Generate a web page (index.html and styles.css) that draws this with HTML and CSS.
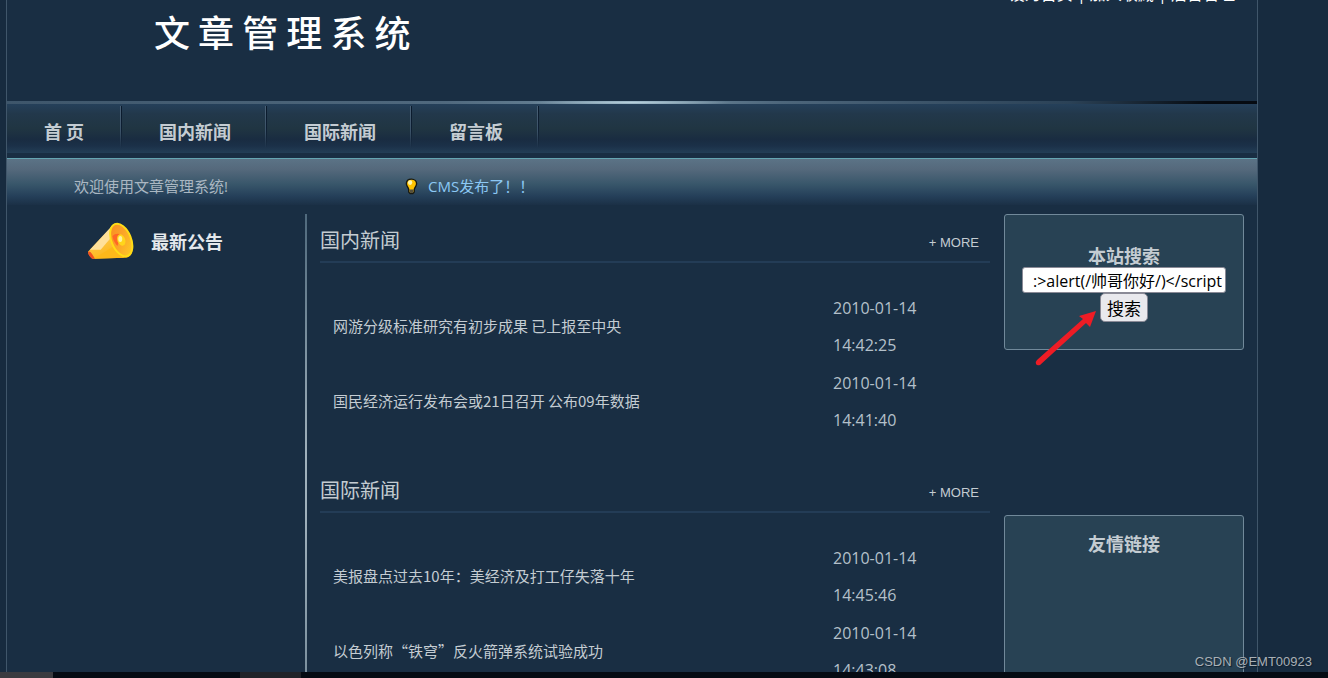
FILE: index.html
```html
<!DOCTYPE html>
<html lang="zh-CN">
<head>
<meta charset="utf-8">
<title>文章管理系统</title>
<link rel="stylesheet" href="styles.css">
</head>
<body>
<div class="viewport">
  <div class="page">
    <header class="header">
      <div class="top-links"><a href="#">设为首页</a> | <a href="#">加入收藏</a> | <a href="#">后台管理</a></div>
      <h1 class="logo">文 章 管 理 系 统</h1>
    </header>
    <div class="shine"></div>
    <nav class="nav">
      <a href="#">首 页</a>
      <a href="#">国内新闻</a>
      <a href="#">国际新闻</a>
      <a href="#">留言板</a>
    </nav>
    <div class="notice">
      <span class="welcome">欢迎使用文章管理系统!</span>
      <svg class="bulb" viewBox="0 0 14 18" aria-hidden="true">
        <path d="M7 1C3.600 1 1.500 3.200 1.500 6c0 2.500 2 3.600 2.500 6v3l1.500 1.500h3L10 15v-3c.5-2.400 2.500-3.500 2.500-6C12.500 3.200 10.400 1 7 1z" fill="#ffc400" stroke="#171912" stroke-width="1.500"/>
        <path d="M4.800 12.200h4.400v2.600L8.200 16H5.800l-1-1.200z" fill="#55503c"/>
        <ellipse cx="5.500" cy="4.800" rx="2.300" ry="2.500" fill="#fff7b0"/>
      </svg>
      <a class="notice-link" href="#">CMS发布了！！</a>
    </div>
    <div class="content">
      <aside class="left">
        <svg class="horn" viewBox="0 0 48 38" aria-hidden="true">
          <defs>
            <linearGradient id="hornBody" x1="0" y1="0" x2="0.500" y2="1">
              <stop offset="0.350" stop-color="#ffe19a"/><stop offset="0.600" stop-color="#fdc23a"/><stop offset="1" stop-color="#fdb515"/>
            </linearGradient>
            <linearGradient id="hornMouth" x1="0" y1="0" x2="0.600" y2="1">
              <stop offset="0" stop-color="#f98a20"/><stop offset="0.500" stop-color="#fba028"/><stop offset="1" stop-color="#fdc526"/>
            </linearGradient>
          </defs>
          <path d="M27 2Q30 0 34 2C42 6 48 20 46 31Q44 36 39 36L6 37Q2 35 1 30Z" fill="url(#hornBody)"/>
          <path d="M3 28L26 4 25 15 14 28Z" fill="#ffe09a"/>
          <path d="M7 37L38 36 26 25Z" fill="#fdb81a"/>
          <path d="M1 30Q3 29 5 32T8 37L5 37Q1 34 1 30Z" fill="#ef4f20"/>
          <ellipse cx="35" cy="18" rx="10" ry="17.500" transform="rotate(-22 35 18)" fill="url(#hornMouth)" stroke="#ffdc16" stroke-width="2"/>
          <path d="M26 14Q30 10 35 13L31 24Q27 20 26 14Z" fill="#ff6726"/>
          <ellipse cx="35" cy="18" rx="4" ry="6" transform="rotate(-20 35 18)" fill="#ffd51b"/>
          <ellipse cx="34" cy="17" rx="2" ry="3" fill="#fff2a0"/>
        </svg>
        <h2>最新公告</h2>
      </aside>
      <main class="main">
        <section class="section">
          <div class="section-head"><h2>国内新闻</h2><a href="#">+ MORE</a></div>
          <table class="news">
            <tr><td><a href="#">网游分级标准研究有初步成果 已上报至中央</a></td><td class="date">2010-01-14<br>14:42:25</td></tr>
            <tr><td><a href="#">国民经济运行发布会或21日召开 公布09年数据</a></td><td class="date">2010-01-14<br>14:41:40</td></tr>
          </table>
        </section>
        <section class="section">
          <div class="section-head"><h2>国际新闻</h2><a href="#">+ MORE</a></div>
          <table class="news">
            <tr><td><a href="#">美报盘点过去10年：美经济及打工仔失落十年</a></td><td class="date">2010-01-14<br>14:45:46</td></tr>
            <tr><td><a href="#">以色列称“铁穹”反火箭弹系统试验成功</a></td><td class="date">2010-01-14<br>14:43:08</td></tr>
          </table>
        </section>
      </main>
      <aside class="right">
        <form class="box search" onsubmit="return false">
          <label for="keyword">本站搜索</label>
          <input id="keyword" type="text" value=":&gt;alert(/帅哥你好/)&lt;/script">
          <button type="submit">搜索</button>
          <svg class="arrow" viewBox="0 0 64 60" aria-hidden="true">
            <path d="M62 2L56 18 52 14 6 56Q3 57 2 55Q1 53 3 51L49 10 45 7Z" fill="#ee1c25"/>
          </svg>
        </form>
        <section class="box links"><h2>友情链接</h2></section>
      </aside>
    </div>
  </div>
  <div class="watermark">CSDN @EMT00923</div>
</div>
<div class="taskbar"><span class="task-start"></span><span class="task-item"></span></div>
</body>
</html>
```
FILE: styles.css
```css
* { box-sizing: border-box; }
body {
  margin: 0;
  height: 100vh;
  display: flex;
  flex-direction: column;
  overflow: hidden;
  background: #172b3f;
  color: #c4ccd2;
  font: 15px/24px "Open Sans", "Noto Sans CJK SC", sans-serif;
}
a { color: inherit; text-decoration: none; }
h1, h2 { margin: 0; }
.viewport { flex: 1; min-height: 0; overflow: hidden; position: relative; display: flex; }
.page {
  flex: 1;
  margin: 0 70px 0 6px;
  border: solid #40566a;
  border-width: 0 1px;
  background: #192e43;
}
.header { display: flow-root; height: 101px; }
.top-links {
  margin-top: -18px;
  padding-right: 22px;
  text-align: right;
  font-size: 16px;
  color: #fff;
}
.logo {
  padding-left: 147px;
  font: 500 36px/50px "Noto Sans CJK SC", sans-serif;
  color: #fff;
}
.shine {
  height: 3px;
  background:
    radial-gradient(ellipse 100px 3px at 50% 50%, #b5cfdc, transparent),
    linear-gradient(90deg, #3e566b, #50697e 35%, #7490a3 50%, #4d667b 62%, #2b4257 85%, #060b12 96%);
}
.nav {
  display: flex;
  height: 49px;
  padding: 2px 0 5px;
  background: linear-gradient(#25405a, #22384b 20%, #203542 50%, #192c41 72%, #1b3048 85%, #233e56);
}
.nav a {
  padding: 2px 36px 0 37px;
  background:
    linear-gradient(#4a6075, #3b5268 60%, transparent) right 1px top / 1px 100% no-repeat,
    linear-gradient(#0a1a2c, #0f2034 60%, transparent) right top / 1px 100% no-repeat;
  font: bold 18px/46px "Noto Sans CJK SC", sans-serif;
}
.nav a:first-child { padding-right: 38px; }
.notice {
  display: flex;
  align-items: center;
  margin-top: 5px;
  height: 47px;
  padding: 8px 0 0 67px;
  border-top: 1px solid #65a5b2;
  background: linear-gradient(#5b7386, #55697c 22%, #38566a 55%, #25405a 80%, #1b3046);
}
.welcome { width: 331px; color: #aab7c2; }
.bulb { width: 13px; height: 17px; margin-right: 10px; }
.notice-link { color: #8cc8f4; }
.content { display: flex; padding: 9px 13px 0 0; }
.left {
  width: 300px;
  height: 600px;
  display: flex;
  align-items: flex-start;
  gap: 17px;
  padding: 8px 0 0 80px;
  border-right: 2px solid;
  border-image: linear-gradient(#4f697c, #9fb0bb 40%, #9fb0bb 50%, #5c7485) 1;
}
.horn { width: 47px; height: 38px; }
.left h2 { font-size: 18px; line-height: 40px; color: #e4e8ec; }
.main { flex: 1; margin: 0 14px 0 13px; }
.section { height: 250px; }
.section-head {
  display: flex;
  justify-content: space-between;
  align-items: center;
  height: 49px;
  padding: 6px 11px 0 0;
  border-bottom: 2px solid #233c56;
}
.section-head h2 { font-size: 20px; font-weight: 400; }
.section-head a { font: 13px/24px "Liberation Sans", sans-serif; padding-top: 4px; }
.news { width: 100%; margin-top: 26px; border-collapse: collapse; }
.news tr { height: 75px; }
.news td { padding: 0 0 2px 13px; font-family: "Noto Sans CJK SC", sans-serif; }
.news .date {
  width: 157px;
  padding: 0;
  font: 16px/37px "Open Sans", sans-serif;
  color: #b4c0ca;
}
.right { width: 240px; }
.box {
  border: 1px solid #71899a;
  border-radius: 3px;
  background: #284254;
  text-align: center;
}
.search {
  position: relative;
  display: flex;
  flex-direction: column;
  align-items: center;
  height: 136px;
  padding-top: 28px;
}
.search label, .links h2 { font: bold 18px/24px "Noto Sans CJK SC", sans-serif; }
.search input {
  width: 204px;
  height: 26px;
  padding: 0 3px;
  border: 1px solid #8a8a96;
  border-radius: 3px;
  background: #fff;
  color: #000;
  font: 16px "Open Sans", "Noto Sans CJK SC", sans-serif;
  text-align: right;
}
.search button {
  width: 48px;
  height: 29px;
  padding: 0;
  border: 1px solid #8a8a96;
  border-radius: 5px;
  background: #e9e9ed;
  color: #000;
  font: 17px/26px "Noto Sans CJK SC", sans-serif;
}
.arrow { position: absolute; left: 29px; top: 94px; width: 64px; height: 60px; }
.links { height: 300px; margin-top: 165px; padding-top: 15px; }
.watermark {
  position: absolute;
  right: 16px;
  bottom: 0;
  font: 13px/20px "Liberation Sans", sans-serif;
  color: #a9b0b6;
  text-shadow: 1px 1px 1px #10202f;
}
.taskbar { display: flex; gap: 187px; height: 6px; background: #050b13; }
.task-start { width: 53px; background: #3a3b40; }
.task-item { width: 61px; background: #202329; }
```
